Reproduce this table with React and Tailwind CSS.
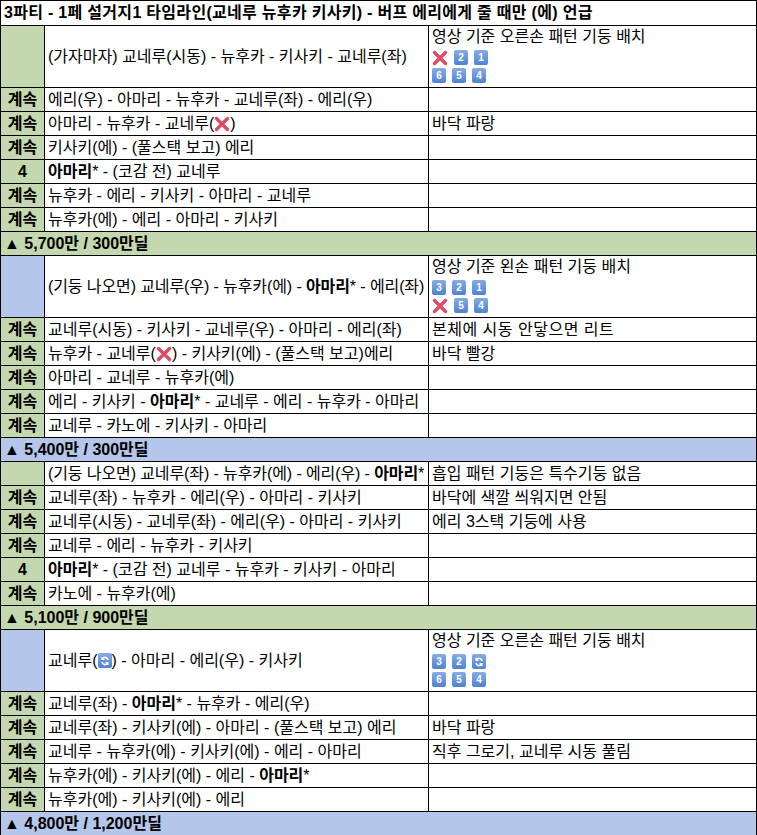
import React from "react";

const GREEN = "bg-[#c4d8af]";
const BLUE = "bg-[#b4c6ea]";

const Key = ({ n }) => (
  <span className="inline-flex items-center justify-center w-[14px] h-[15px] rounded-[2px] bg-gradient-to-b from-[#86ace4] to-[#4f82d2] text-white text-[10px] font-bold leading-none align-middle">
    {n === "r" ? (
      <svg width="10" height="10" viewBox="0 0 10 10" fill="none" stroke="white" strokeWidth="1.6">
        <path d="M8 4a3 3 0 0 0-5.5-1.2" />
        <path d="M2 6a3 3 0 0 0 5.5 1.2" />
        <path d="M2.2 1v2.2h2.2" />
        <path d="M7.8 9V6.8H5.6" />
      </svg>
    ) : (
      n
    )}
  </span>
);

const Cross = () => (
  <span className="inline-flex items-center justify-center w-[16px] h-[16px] align-middle">
    <svg width="16" height="16" viewBox="0 0 16 16">
      <path d="M2.5 2.5L13.5 13.5M13.5 2.5L2.5 13.5" stroke="#dc4a63" strokeWidth="3.4" strokeLinecap="round" />
    </svg>
  </span>
);

const Pattern = ({ title, rows }) => (
  <div className="flex flex-col h-full">
    <div className="leading-[21px]">{title}</div>
    {rows.map((r, i) => (
      <div key={i} className="flex gap-[6px] mt-[3px] h-[15px] items-center">
        {r.map((k, j) => (k === "x" ? <Cross key={j} /> : <Key key={j} n={k} />))}
      </div>
    ))}
  </div>
);

const B = ({ children }) => <b className="font-bold">{children}</b>;

const Row = ({ label, labelBg, mid, right, tall }) => (
  <tr className={tall ? "h-[62px]" : "h-[24px]"}>
    <td className={`border border-black ${labelBg} text-center font-bold p-0`}>{label}</td>
    <td className="border border-black px-[3px] py-0 whitespace-nowrap overflow-hidden">{mid}</td>
    <td className={`border border-black px-[3px] py-0 whitespace-nowrap overflow-hidden ${tall ? "align-top" : ""}`}>{right}</td>
  </tr>
);

const Header = ({ text, bg }) => (
  <tr className="h-[24px]">
    <td colSpan={3} className={`border border-black ${bg} font-bold px-[3px] py-0`}>
      {text}
    </td>
  </tr>
);

export default function App() {
  return (
    <div
      className="w-[757px] h-[835px] bg-white text-black text-[16px] leading-[20px] overflow-hidden"
      style={{ fontFamily: '"Liberation Sans", "Noto Sans CJK KR", sans-serif' }}
    >
      <table className="w-[757px] border-collapse table-fixed">
        <colgroup>
          <col className="w-[44px]" />
          <col className="w-[384px]" />
          <col />
        </colgroup>
        <tbody>
          <tr className="h-[25px]">
            <td colSpan={3} className="border border-black font-bold px-[3px] py-0 tracking-[0.3px] whitespace-nowrap">
              3파티 - 1페 설거지1 타임라인(교네루 뉴후카 키사키) - 버프 에리에게 줄 때만 (에) 언급
            </td>
          </tr>

          {/* 첫번째 구간 */}
          <Row
            tall
            labelBg={GREEN}
            mid="(가자마자) 교네루(시동) - 뉴후카 - 키사키 - 교네루(좌)"
            right={<Pattern title="영상 기준 오른손 패턴 기둥 배치" rows={[["x", "2", "1"], ["6", "5", "4"]]} />}
          />
          <Row label="계속" labelBg={GREEN} mid="에리(우) - 아마리 - 뉴후카 - 교네루(좌) - 에리(우)" />
          <Row
            label="계속"
            labelBg={GREEN}
            mid={
              <span className="inline-flex items-center">
                아마리 - 뉴후카 - 교네루(<Cross />)
              </span>
            }
            right="바닥 파랑"
          />
          <Row label="계속" labelBg={GREEN} mid="키사키(에) - (풀스택 보고) 에리" />
          <Row
            label="4"
            labelBg={GREEN}
            mid={
              <>
                <B>아마리</B>* - (코감 전) 교네루
              </>
            }
          />
          <Row label="계속" labelBg={GREEN} mid="뉴후카 - 에리 - 키사키 - 아마리 - 교네루" />
          <Row label="계속" labelBg={GREEN} mid="뉴후카(에) - 에리 - 아마리 - 키사키" />
          <Header text="▲ 5,700만 / 300만딜" bg={GREEN} />

          {/* 두번째 구간 */}
          <Row
            tall
            labelBg={BLUE}
            mid={
              <span className="tracking-[-0.1px]">
                (기둥 나오면) 교네루(우) - 뉴후카(에) - <B>아마리</B>* - 에리(좌)
              </span>
            }
            right={<Pattern title="영상 기준 왼손 패턴 기둥 배치" rows={[["3", "2", "1"], ["x", "5", "4"]]} />}
          />
          <Row
            label="계속"
            labelBg={GREEN}
            mid="교네루(시동) - 키사키 - 교네루(우) - 아마리 - 에리(좌)"
            right={<span className="tracking-[0.5px]">본체에 시동 안닿으면 리트</span>}
          />
          <Row
            label="계속"
            labelBg={GREEN}
            mid={
              <span className="inline-flex items-center">
                뉴후카 - 교네루(<Cross />) - 키사키(에) - (풀스택 보고)에리
              </span>
            }
            right="바닥 빨강"
          />
          <Row label="계속" labelBg={GREEN} mid="아마리 - 교네루 - 뉴후카(에)" />
          <Row
            label="계속"
            labelBg={GREEN}
            mid={
              <>
                에리 - 키사키 - <B>아마리</B>* - 교네루 - 에리 - 뉴후카 - 아마리
              </>
            }
          />
          <Row label="계속" labelBg={GREEN} mid="교네루 - 카노에 - 키사키 - 아마리" />
          <Header text="▲ 5,400만 / 300만딜" bg={BLUE} />

          {/* 세번째 구간 */}
          <Row
            labelBg={GREEN}
            mid={
              <span className="tracking-[-0.1px]">
                (기둥 나오면) 교네루(좌) - 뉴후카(에) - 에리(우) - <B>아마리</B>*
              </span>
            }
            right="흡입 패턴 기둥은 특수기둥 없음"
          />
          <Row label="계속" labelBg={GREEN} mid="교네루(좌) - 뉴후카 - 에리(우) - 아마리 - 키사키" right="바닥에 색깔 씌워지면 안됨" />
          <Row label="계속" labelBg={GREEN} mid="교네루(시동) - 교네루(좌) - 에리(우) - 아마리 - 키사키" right="에리 3스택 기둥에 사용" />
          <Row label="계속" labelBg={GREEN} mid="교네루 - 에리 - 뉴후카 - 키사키" />
          <Row
            label="4"
            labelBg={GREEN}
            mid={
              <>
                <B>아마리</B>* - (코감 전) 교네루 - 뉴후카 - 키사키 - 아마리
              </>
            }
          />
          <Row label="계속" labelBg={GREEN} mid="카노에 - 뉴후카(에)" />
          <Header text="▲ 5,100만 / 900만딜" bg={GREEN} />

          {/* 네번째 구간 */}
          <Row
            tall
            labelBg={BLUE}
            mid={
              <span className="inline-flex items-center">
                교네루(<Key n="r" />) - 아마리 - 에리(우) - 키사키
              </span>
            }
            right={<Pattern title="영상 기준 오른손 패턴 기둥 배치" rows={[["3", "2", "r"], ["6", "5", "4"]]} />}
          />
          <Row
            label="계속"
            labelBg={GREEN}
            mid={
              <>
                교네루(좌) - <B>아마리</B>* - 뉴후카 - 에리(우)
              </>
            }
          />
          <Row label="계속" labelBg={GREEN} mid="교네루(좌) - 키사키(에) - 아마리 - (풀스택 보고) 에리" right="바닥 파랑" />
          <Row label="계속" labelBg={GREEN} mid="교네루 - 뉴후카(에) - 키사키(에) - 에리 - 아마리" right="직후 그로기, 교네루 시동 풀림" />
          <Row
            label="계속"
            labelBg={GREEN}
            mid={
              <>
                뉴후카(에) - 키사키(에) - 에리 - <B>아마리</B>*
              </>
            }
          />
          <Row label="계속" labelBg={GREEN} mid="뉴후카(에) - 키사키(에) - 에리" />
          <Header text="▲ 4,800만 / 1,200만딜" bg={BLUE} />
        </tbody>
      </table>
    </div>
  );
}
